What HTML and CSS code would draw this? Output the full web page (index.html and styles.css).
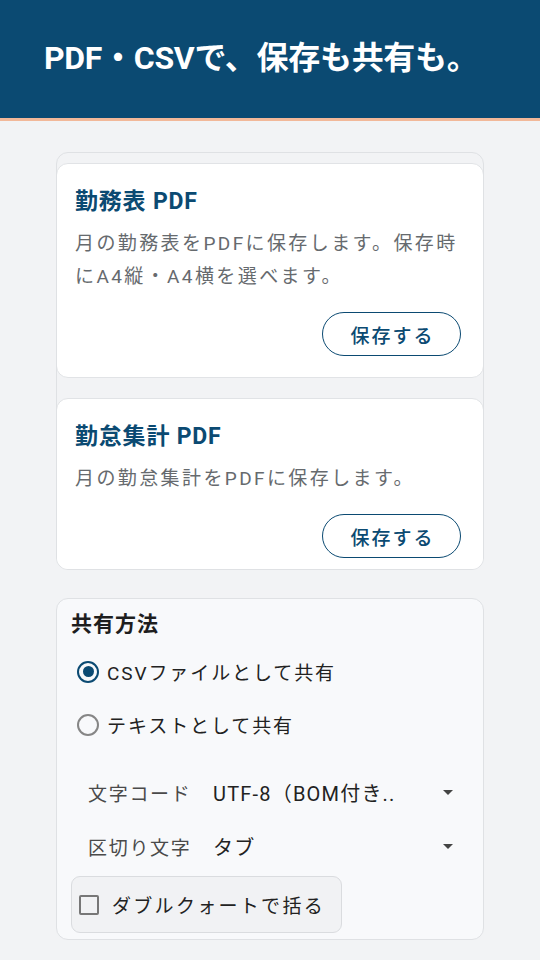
FILE: index.html
```html
<!DOCTYPE html>
<html lang="ja">
<head>
<meta charset="utf-8">
<title>エクスポート</title>
<link rel="stylesheet" href="styles.css">
</head>
<body>
<header class="topbar">
  <h1 class="topbar-title">PDF・CSVで、保存も共有も。</h1>
</header>
<main class="content">
  <section class="pdf-list">
    <article class="pdf-card">
      <h2 class="pdf-title">勤務表 PDF</h2>
      <p class="pdf-desc">月の勤務表をPDFに保存します。保存時にA4縦・A4横を選べます。</p>
      <div class="pdf-actions"><button class="btn-outline">保存する</button></div>
    </article>
    <article class="pdf-card">
      <h2 class="pdf-title">勤怠集計 PDF</h2>
      <p class="pdf-desc">月の勤怠集計をPDFに保存します。</p>
      <div class="pdf-actions"><button class="btn-outline">保存する</button></div>
    </article>
  </section>

  <section class="share-box">
    <h3 class="share-title">共有方法</h3>
    <label class="radio-row"><span class="radio checked"></span><span class="radio-text">CSVファイルとして共有</span></label>
    <label class="radio-row"><span class="radio"></span><span class="radio-text">テキストとして共有</span></label>
    <div class="select-group">
      <div class="select-row">
        <span class="select-label">文字コード</span>
        <span class="select-value">UTF-8（BOM付き..</span>
        <span class="caret"></span>
      </div>
      <div class="select-row">
        <span class="select-label">区切り文字</span>
        <span class="select-value">タブ</span>
        <span class="caret"></span>
      </div>
    </div>
    <label class="check-chip"><span class="checkbox"></span><span class="check-text">ダブルクォートで括る</span></label>
  </section>
</main>
</body>
</html>
```

FILE: styles.css
```css
* { box-sizing: border-box; }
html, body { margin: 0; padding: 0; }
body {
  width: 540px;
  height: 960px;
  overflow: hidden;
  background: #f2f3f5;
  font-family: Roboto, "Noto Sans CJK JP", sans-serif;
  color: #222;
}
.topbar {
  height: 121px;
  background: #0b4a72;
  border-bottom: 3px solid #f2b899;
  display: flex;
  align-items: center;
  padding: 0 0 2px 44px;
}
.topbar-title {
  margin: 0;
  color: #fff;
  font-size: 32px;
  font-weight: 700;
  letter-spacing: -0.3px;
  line-height: 1.2;
}
.content {
  padding: 31px 56px 0;
  display: flex;
  flex-direction: column;
}
.pdf-list {
  height: 418px;
  overflow: hidden;
  border: 1px solid #dfe1e4;
  border-radius: 12px;
  background: #f2f3f5;
  padding-top: 10px;
  display: flex;
  flex-direction: column;
  gap: 20px;
}
.pdf-card {
  flex-shrink: 0;
  background: #fff;
  border: 1px solid #e1e3e6;
  border-radius: 12px;
  margin: 0 -1px;
  padding: 22px 22px 21px 18px;
}
.pdf-title {
  margin: 0;
  font-size: 23px;
  line-height: 31px;
  font-weight: 700;
  color: #0b4a72;
  letter-spacing: 0.8px;
}
.pdf-desc {
  margin: 10px 0 0;
  font-size: 19px;
  line-height: 33px;
  color: #666a6e;
  letter-spacing: 2.4px;
}
.pdf-actions {
  display: flex;
  justify-content: flex-end;
  margin-top: 19px;
}
.btn-outline {
  width: 139px;
  height: 44px;
  border: 1.5px solid #0b4a72;
  border-radius: 22px;
  background: #fff;
  color: #0b4a72;
  font-family: inherit;
  font-size: 19px;
  font-weight: 500;
  letter-spacing: 2px;
  padding: 0 0 0 2px;
}
.share-box {
  margin-top: 28px;
  height: 342px;
  border: 1px solid #dfe1e4;
  border-radius: 12px;
  background: #f8f9fb;
  padding: 11px 14px 0;
  display: flex;
  flex-direction: column;
}
.share-title {
  margin: 0;
  font-size: 21px;
  line-height: 28px;
  font-weight: 700;
  color: #1e1e1e;
  letter-spacing: 1px;
}
.radio-row {
  height: 53px;
  display: flex;
  align-items: center;
  gap: 8px;
  padding-left: 6px;
}
.share-title + .radio-row { margin-top: 7px; }
.radio {
  width: 22px;
  height: 22px;
  border-radius: 50%;
  border: 2px solid #868686;
  display: flex;
  align-items: center;
  justify-content: center;
  flex-shrink: 0;
}
.radio.checked { border: 2.5px solid #0b4a72; }
.radio.checked::after {
  content: "";
  width: 11px;
  height: 11px;
  border-radius: 50%;
  background: #0b4a72;
}
.radio-text {
  font-size: 19px;
  letter-spacing: 1.9px;
  color: #222;
}
.select-group {
  margin-top: 14px;
  display: flex;
  flex-direction: column;
}
.select-row {
  height: 54px;
  display: flex;
  align-items: center;
  padding: 0 16px 0 17px;
}
.select-label {
  width: 125px;
  font-size: 19px;
  color: #4a4a4a;
  letter-spacing: 1.7px;
}
.select-value {
  flex: 1;
  font-size: 20px;
  color: #222;
  letter-spacing: 1.2px;
}
.caret {
  width: 0;
  height: 0;
  border-left: 5.5px solid transparent;
  border-right: 5.5px solid transparent;
  border-top: 5.5px solid #444;
}
.check-chip {
  margin-top: 3px;
  align-self: flex-start;
  width: 271px;
  height: 57px;
  border: 1px solid #dadcdf;
  border-radius: 9px;
  background: #f1f2f4;
  display: flex;
  align-items: center;
  gap: 13px;
  padding-left: 7px;
}
.checkbox {
  width: 20px;
  height: 20px;
  border: 2px solid #777;
  border-radius: 2px;
  flex-shrink: 0;
}
.check-text {
  font-size: 19px;
  letter-spacing: 2.3px;
  color: #222;
}
```
